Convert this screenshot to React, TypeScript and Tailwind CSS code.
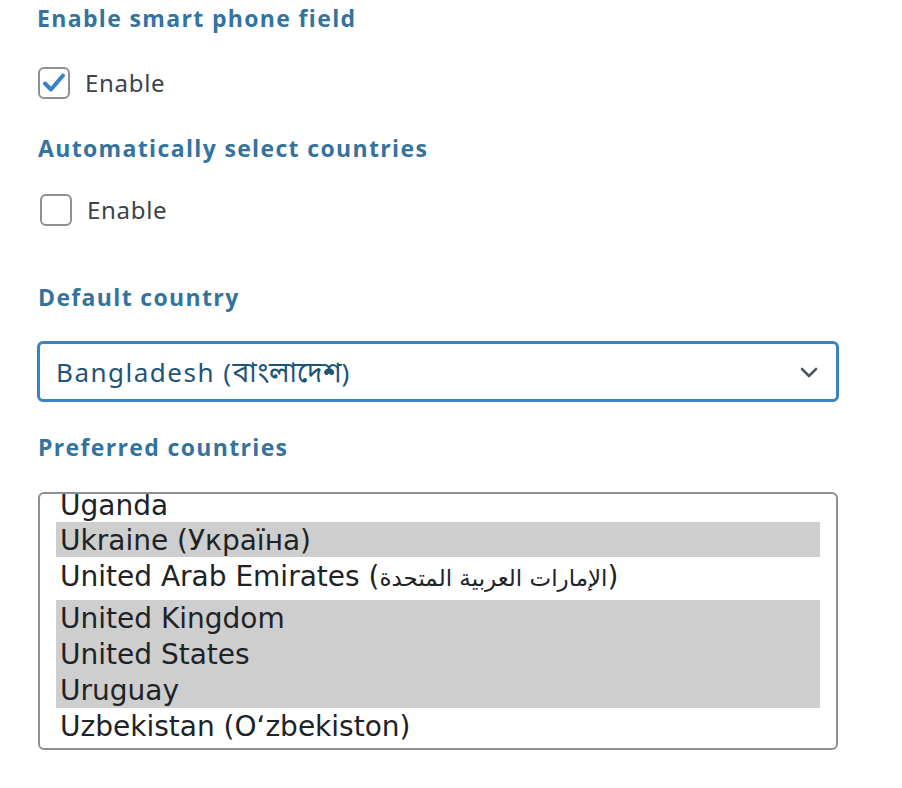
import React from "react";

const Heading = ({ children, className = "" }: { children: React.ReactNode; className?: string }) => (
  <div
    className={`text-[23px] font-bold leading-[30px] tracking-[1.35px] text-[#33739e] ${className}`}
    style={{ fontFamily: '"Open Sans", "Noto Sans", sans-serif' }}
  >
    {children}
  </div>
);

const Check = ({ checked }: { checked: boolean }) => (
  <div className="w-[32px] h-[32px] rounded-[6px] border-2 border-[#8c8f94] bg-white flex items-center justify-center">
    {checked && (
      <svg width="26" height="26" viewBox="0 0 26 26">
        <path d="M4 13.5 L10 19.5 L22 5.5" fill="none" stroke="#3582c4" strokeWidth="4" strokeLinecap="round" strokeLinejoin="round" />
      </svg>
    )}
  </div>
);

const rows: { label: React.ReactNode; key: string; sel: boolean; h: number; cls: string }[] = [
  { key: "ug", label: "Uganda", sel: false, h: 36, cls: "pt-[4px]" },
  { key: "ua", label: "Ukraine (Україна)", sel: true, h: 35, cls: "pt-[3px]" },
  {
    key: "ae",
    label: (
      <>
        United Arab Emirates (<span className="text-[23px]">الإمارات العربية المتحدة</span>)
      </>
    ),
    sel: false,
    h: 43,
    cls: "pb-[3px]",
  },
  { key: "uk", label: "United Kingdom", sel: true, h: 36, cls: "pt-[2px]" },
  { key: "us", label: "United States", sel: true, h: 36, cls: "pt-[2px]" },
  { key: "uy", label: "Uruguay", sel: true, h: 36, cls: "pt-[2px]" },
  { key: "uz", label: "Uzbekistan (Oʻzbekiston)", sel: false, h: 36, cls: "pt-[2px]" },
];

export default function App() {
  const bodyFont = { fontFamily: '"Noto Sans", "Open Sans", sans-serif' };
  return (
    <div className="w-[902px] h-[788px] bg-white overflow-hidden">
      <div className="pl-[37px] pt-[3px] w-[802px]">
        <Heading>Enable smart phone field</Heading>
        <div className="flex items-center mt-[34px] ml-[1px] gap-[15px]">
          <Check checked />
          <span className="text-[24px] tracking-[0.7px] text-[#3c434a] leading-[32px]" style={bodyFont}>Enable</span>
        </div>
        <Heading className="mt-[34px] ml-[1px]">Automatically select countries</Heading>
        <div className="flex items-center mt-[31px] ml-[3px] gap-[15px]">
          <Check checked={false} />
          <span className="text-[24px] tracking-[0.7px] text-[#3c434a] leading-[32px]" style={bodyFont}>Enable</span>
        </div>
        <Heading className="mt-[56px] ml-[1px]">Default country</Heading>
        <div className="mt-[29px] h-[61px] w-[802px] rounded-[6px] border-[3px] border-[#3b82c0] flex items-center justify-between pl-[16px] pr-[16px]">
          <span
            className="text-[26px] text-[#1f5479] leading-[36px]"
            style={{ fontFamily: '"Noto Sans", "Open Sans", "Noto Sans Bengali", sans-serif' }}
          >
            <span className="tracking-[1.5px]">Bangladesh (</span>
            <span className="text-[28px]">বাংলাদেশ</span>
            <span>)</span>
          </span>
          <svg width="22" height="22" viewBox="0 0 22 22">
            <path d="M4 8 L11 15 L18 8" fill="none" stroke="#50575e" strokeWidth="2.6" strokeLinecap="round" strokeLinejoin="round" />
          </svg>
        </div>
        <Heading className="mt-[30px] ml-[1px]">Preferred countries</Heading>
        <div className="mt-[30px] ml-[1px] h-[258px] w-[800px] rounded-[6px] border-2 border-[#8c8f94] overflow-hidden px-[16px]">
          <div className="-mt-[8px]">
            {rows.map((r) => (
              <div
                key={r.key}
                className={`flex items-center pl-[4px] text-[28px] leading-[32px] text-[#1d2327] whitespace-pre ${r.cls} ${r.sel ? "bg-[#cecece]" : ""}`}
                style={{ height: r.h, fontFamily: '"DejaVu Sans", sans-serif' }}
              >
                <span>{r.label}</span>
              </div>
            ))}
          </div>
        </div>
      </div>
    </div>
  );
}
